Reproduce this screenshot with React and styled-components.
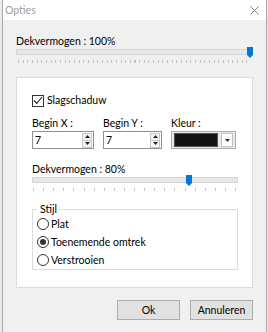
import React from "react"
import styled, { createGlobalStyle } from "styled-components"

const GlobalStyle = createGlobalStyle`
  *, *::before, *::after { box-sizing: border-box; }
  html, body { margin: 0; padding: 0; background: #ebebeb; }
  body {
    font-family: Lato, "Noto Sans", sans-serif;
    font-size: 10.5px;
    color: #000;
  }
`

const Window = styled.div`
  margin-left: 2px;
  width: 265px;
  height: 332px;
  border-left: 1px solid #a9a9a9;
  border-right: 1px solid #a9a9a9;
  background: #f0f0f0;
  display: flex;
  flex-direction: column;
`

const TitleBar = styled.div`
  height: 20px;
  background: #fff;
  display: flex;
  align-items: center;
  justify-content: space-between;
  padding: 0 7px 0 2px;
`

const Title = styled.span`
  color: #9d9d9d;
  line-height: 15px;
`

const Body = styled.div`
  flex: 1;
  padding: 14px 13px 0 13px;
  display: flex;
  flex-direction: column;
`

const Label = styled.div`
  line-height: 15px;
  height: 15px;
  white-space: nowrap;
`

const SliderWrap = styled.div`
  position: relative;
`

const Track = styled.div`
  height: 6px;
  border: 1px solid #d6d6d6;
  background: #e7e7e7;
`

const Ticks = styled.div`
  height: 3px;
  margin: 5px ${p => p.$inset}px 0;
  background: repeating-linear-gradient(
    to right,
    #c3c3c3 0 1px,
    transparent 1px ${p => p.$step}px
  );
`

const Thumb = styled.div`
  position: absolute;
  top: -2px;
  width: 6px;
  height: 11px;
  margin-left: -3px;
  background: #0078d7;
  clip-path: polygon(0 0, 100% 0, 100% 72%, 50% 100%, 0 72%);
`

const Panel = styled.div`
  margin-top: 14px;
  background: #fff;
  border: 1px solid #dcdcdc;
  padding: 15px 14px 17px 15px;
  display: flex;
  flex-direction: column;
`

const CheckRow = styled.label`
  display: flex;
  align-items: center;
  gap: 3px;
  height: 15px;
  line-height: 15px;
`

const CheckBox = styled.span`
  width: 12px;
  height: 12px;
  border: 1px solid #333;
  background: #fff;
  display: flex;
  align-items: center;
  justify-content: center;
`

const FieldRow = styled.div`
  display: flex;
  gap: 9px;
  margin-top: 8px;
`

const Field = styled.div`
  width: ${p => p.$w}px;
  display: flex;
  flex-direction: column;
`

const SpinBox = styled.div`
  height: 18px;
  border: 1px solid #8f8f8f;
  background: #fff;
  display: flex;
  align-items: center;
  padding: 0 1px 0 2px;
`

const SpinValue = styled.span`
  flex: 1;
  line-height: 15px;
`

const SpinButtons = styled.div`
  width: 10px;
  height: 15px;
  display: flex;
  flex-direction: column;
  border: 1px solid #c8c8c8;
  background: #f4f4f4;
`

const SpinHalf = styled.div`
  flex: 1;
  display: flex;
  align-items: center;
  justify-content: center;
  & + & { border-top: 1px solid #c8c8c8; }
`

const Combo = styled.div`
  height: 18px;
  border: 1px solid #adadad;
  background: #e9e9e9;
  display: flex;
  align-items: center;
  padding: 0 2px;
  gap: 3px;
`

const Swatch = styled.div`
  width: 45px;
  height: 14px;
  background: ${p => p.$color};
  border: 1px solid #555;
`

const DropButton = styled.div`
  width: 12px;
  height: 14px;
  border: 1px solid #c4c4c4;
  background: #fdfdfd;
  display: flex;
  align-items: center;
  justify-content: center;
`

const SliderLabel = styled(Label)`
  margin-top: 13px;
`

const Group = styled.fieldset`
  margin: 12px 0 0;
  min-width: 0;
  padding: 0 0 0 4px;
  border: 1px solid #dcdcdc;
`

const Legend = styled.legend`
  padding: 0 2px 0 3px;
  line-height: 12px;
`

const RadioRow = styled.label`
  display: flex;
  align-items: center;
  gap: 2px;
  height: 18px;
  line-height: 15px;
`

const RadioCircle = styled.span`
  width: 12px;
  height: 12px;
  border-radius: 50%;
  border: 1px solid #333;
  background: #fff;
  display: flex;
  align-items: center;
  justify-content: center;

  &::after {
    content: "";
    width: 6px;
    height: 6px;
    border-radius: 50%;
    background: ${p => (p.$checked ? "#333" : "transparent")};
  }
`

const Footer = styled.div`
  display: flex;
  justify-content: flex-end;
  gap: 10px;
  margin-top: 12px;
`

const Button = styled.button`
  width: 63px;
  height: 20px;
  border: 1px solid #adadad;
  background: #e1e1e1;
  font: inherit;
  color: #000;
  padding: 0;
`

function Slider({ thumbAt, inset, step }) {
  return (
    <SliderWrap>
      <Track />
      <Thumb style={{ left: `${thumbAt}px` }} />
      <Ticks $inset={inset} $step={step} />
    </SliderWrap>
  )
}

function Spin({ value, width }) {
  return (
    <SpinBox>
      <SpinValue>{value}</SpinValue>
      <SpinButtons>
        <SpinHalf>
          <svg width="5" height="3" viewBox="0 0 5 3"><path d="M0 3 L2.5 0 L5 3 Z" fill="#222" /></svg>
        </SpinHalf>
        <SpinHalf>
          <svg width="5" height="3" viewBox="0 0 5 3"><path d="M0 0 L2.5 3 L5 0 Z" fill="#222" /></svg>
        </SpinHalf>
      </SpinButtons>
    </SpinBox>
  )
}

const styles = [
  { label: "Plat", checked: false },
  { label: "Toenemende omtrek", checked: true },
  { label: "Verstrooien", checked: false },
]

export default function App() {
  return (
    <>
      <GlobalStyle />
      <Window>
        <TitleBar>
          <Title>Opties</Title>
          <svg width="9" height="9" viewBox="0 0 9 9">
            <path d="M0.5 0.5 L8.5 8.5 M8.5 0.5 L0.5 8.5" stroke="#7f7f7f" strokeWidth="1" />
          </svg>
        </TitleBar>
        <Body>
          <Label>Dekvermogen : 100%</Label>
          <Slider thumbAt={234} inset={2} step={4.66} />
          <Panel>
            <CheckRow>
              <CheckBox>
                <svg width="10" height="9" viewBox="0 0 10 9">
                  <path d="M1 4.5 L3.8 7.5 L9 1" fill="none" stroke="#222" strokeWidth="1.1" />
                </svg>
              </CheckBox>
              Slagschaduw
            </CheckRow>
            <FieldRow>
              <Field $w={62}>
                <Label>Begin X :</Label>
                <Spin value="7" />
              </Field>
              <Field $w={59}>
                <Label>Begin Y :</Label>
                <Spin value="7" />
              </Field>
              <Field $w={65}>
                <Label>Kleur :</Label>
                <Combo>
                  <Swatch $color="#141414" />
                  <DropButton>
                    <svg width="5" height="3" viewBox="0 0 5 3"><path d="M0 0 L2.5 3 L5 0 Z" fill="#333" /></svg>
                  </DropButton>
                </Combo>
              </Field>
            </FieldRow>
            <SliderLabel>Dekvermogen : 80%</SliderLabel>
            <Slider thumbAt={157} inset={1} step={10.1} />
            <Group>
              <Legend>Stijl</Legend>
              {styles.map(s => (
                <RadioRow key={s.label}>
                  <RadioCircle $checked={s.checked} />
                  {s.label}
                </RadioRow>
              ))}
            </Group>
          </Panel>
          <Footer>
            <Button>Ok</Button>
            <Button>Annuleren</Button>
          </Footer>
        </Body>
      </Window>
    </>
  )
}
